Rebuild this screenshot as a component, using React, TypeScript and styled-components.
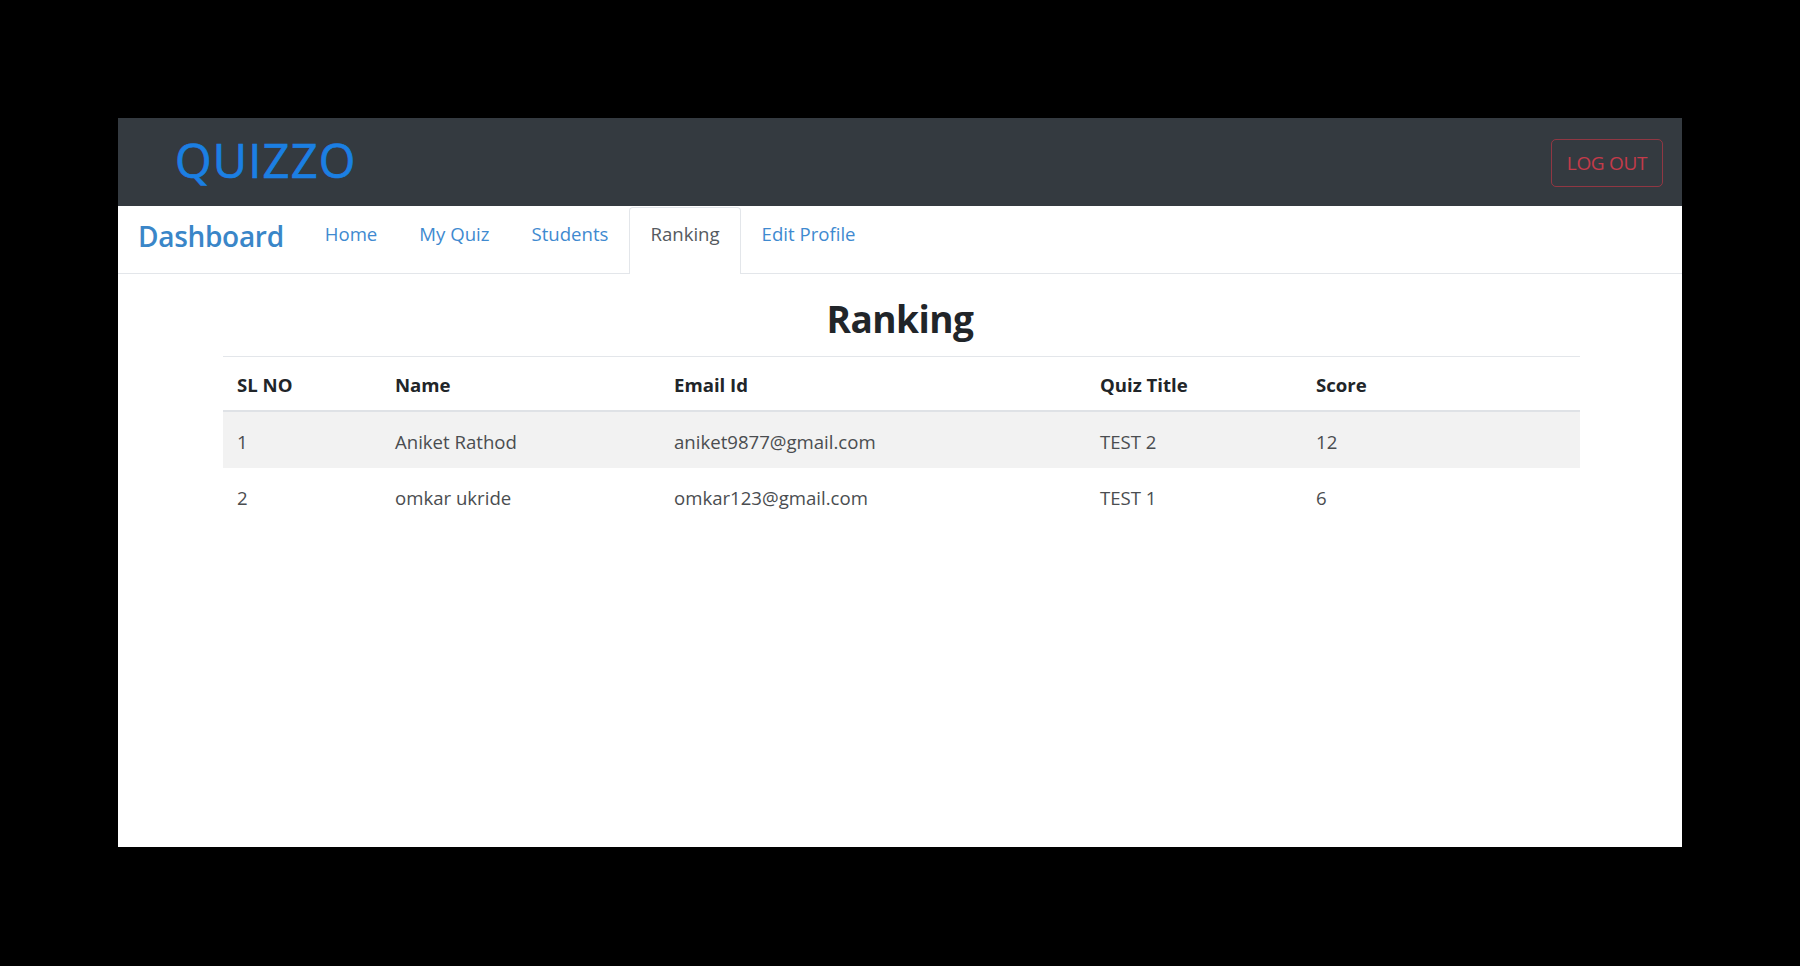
import React from "react";
import styled, { createGlobalStyle } from "styled-components";

const GlobalStyle = createGlobalStyle`
  html, body {
    margin: 0;
    padding: 0;
    background: #000;
    font-family: "Open Sans", "Noto Sans", Arial, sans-serif;
  }
  * { box-sizing: border-box; }
`;

const Frame = styled.div`
  width: 1564px;
  height: 729px;
  margin: 118px auto 0;
  background: #fff;
  display: flex;
  flex-direction: column;
`;

const TopBar = styled.header`
  height: 88px;
  background: #343a40;
  display: flex;
  align-items: center;
  justify-content: space-between;
  padding: 0 19px 0 57px;
`;

const Logo = styled.div`
  font-size: 47px;
  font-weight: 400;
  line-height: 1;
  color: #1b7fe3;
  -webkit-text-stroke: 0.7px #1b7fe3;
  letter-spacing: 1.2px;
  margin-top: -4px;
`;

const LogoutButton = styled.button`
  width: 112px;
  height: 48px;
  margin-top: 2px;
  background: transparent;
  border: 1px solid rgba(220, 53, 69, 0.55);
  border-radius: 5px;
  color: #c43b4a;
  font-family: "Open Sans", Arial, sans-serif;
  font-size: 19px;
  letter-spacing: -0.3px;
  padding: 0;
  cursor: pointer;
`;

const NavBar = styled.nav`
  height: 68px;
  padding: 1px 0 0 20px;
  display: flex;
  align-items: stretch;
  border-bottom: 1px solid #e3e6ea;
`;

const Brand = styled.a`
  font-size: 28px;
  font-weight: 600;
  line-height: 40px;
  color: #3a86c8;
  margin: 9px 20px 0 0;
  align-self: flex-start;
  letter-spacing: -0.3px;
  text-decoration: none;
`;

const Tab = styled.a<{ $active?: boolean }>`
  display: block;
  height: 67px;
  margin-bottom: -1px;
  padding: 11px 20px 0;
  font-size: 18.6px;
  line-height: 30px;
  text-decoration: none;
  color: ${(p) => (p.$active ? "#555a60" : "#3f8ad0")};
  background: ${(p) => (p.$active ? "#fff" : "transparent")};
  border: 1px solid ${(p) => (p.$active ? "#e3e6ea" : "transparent")};
  border-bottom: none;
  border-radius: 4px 4px 0 0;
`;

const Content = styled.main`
  flex: 1;
  display: flex;
  flex-direction: column;
  padding: 0 105px;
`;

const Title = styled.h2`
  margin: 23px 0 15px;
  font-size: 37px;
  line-height: 44px;
  font-weight: 700;
  color: #212529;
  text-align: center;
  letter-spacing: -0.5px;
`;

const Table = styled.table`
  width: 100%;
  border-collapse: collapse;
  table-layout: fixed;
  border-top: 1px solid #e3e6ea;
  font-size: 18.6px;
  line-height: 27px;
`;

const HeadCell = styled.th<{ $w: number }>`
  width: ${(p) => p.$w}px;
  text-align: left;
  font-weight: 700;
  color: #212529;
  padding: 14px 14px 12px;
  border-bottom: 2px solid #dfe2e6;
`;

const Row = styled.tr<{ $striped?: boolean }>`
  background: ${(p) => (p.$striped ? "#f2f2f2" : "#fff")};
  & + & td {
    border-top: 1px solid #e3e6ea;
  }
`;

const Cell = styled.td`
  padding: 16px 14px 13px;
  color: #4a4d50;
`;

const columns = [
  { label: "SL NO", w: 158 },
  { label: "Name", w: 279 },
  { label: "Email Id", w: 426 },
  { label: "Quiz Title", w: 216 },
  { label: "Score", w: 278 },
];

const rows = [
  ["1", "Aniket Rathod", "aniket9877@gmail.com", "TEST 2", "12"],
  ["2", "omkar ukride", "omkar123@gmail.com", "TEST 1", "6"],
];

const tabs = ["Home", "My Quiz", "Students", "Ranking", "Edit Profile"];

export default function App() {
  return (
    <>
      <GlobalStyle />
      <Frame>
        <TopBar>
          <Logo>QUIZZO</Logo>
          <LogoutButton>LOG OUT</LogoutButton>
        </TopBar>
        <NavBar>
          <Brand>Dashboard</Brand>
          {tabs.map((t) => (
            <Tab key={t} $active={t === "Ranking"}>
              {t}
            </Tab>
          ))}
        </NavBar>
        <Content>
          <Title>Ranking</Title>
          <Table>
            <thead>
              <tr>
                {columns.map((c) => (
                  <HeadCell key={c.label} $w={c.w}>
                    {c.label}
                  </HeadCell>
                ))}
              </tr>
            </thead>
            <tbody>
              {rows.map((r, i) => (
                <Row key={i} $striped={i % 2 === 0}>
                  {r.map((v, j) => (
                    <Cell key={j}>{v}</Cell>
                  ))}
                </Row>
              ))}
            </tbody>
          </Table>
        </Content>
      </Frame>
    </>
  );
}
